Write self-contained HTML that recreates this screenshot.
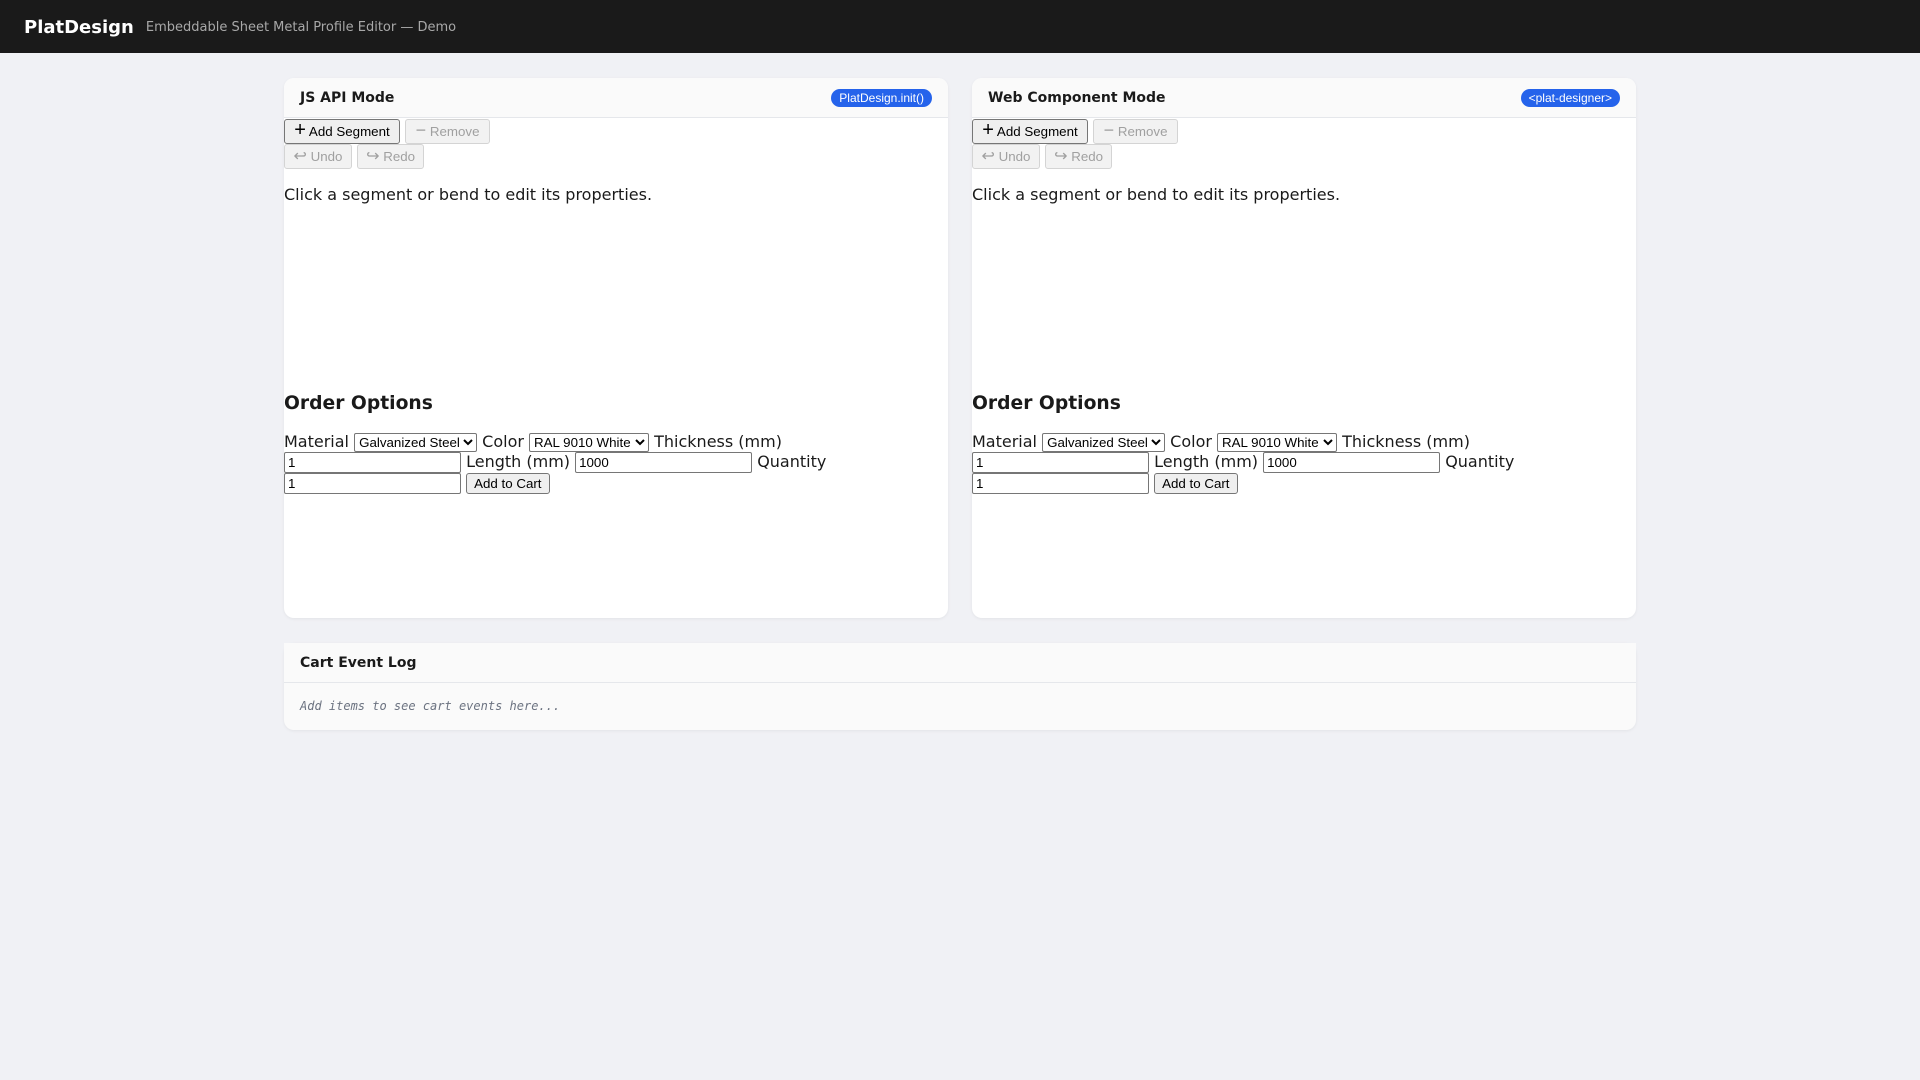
<!DOCTYPE html>
<html><head><meta charset="utf-8"><style>
*{box-sizing:border-box}
body{margin:0;background:#f0f1f5;font-family:"DejaVu Sans",sans-serif;font-size:16px;color:#1a1a1a}
.top{height:53px;background:#1a1a1a;display:flex;align-items:center;padding-left:24px}
.top b{color:#fff;font-size:18px;font-weight:bold;position:relative;top:1px}
.top span{color:#a8a8a8;font-size:13px;margin-left:12px;position:relative;top:1px}
.wrap{position:absolute;left:284px;top:78px;width:1352px}
.row{display:flex;gap:24px}
.card{background:#fff;border-radius:10px;width:664px;height:540px;box-shadow:0 1px 3px rgba(0,0,0,.06);overflow:hidden}
.hd{height:40px;background:#fafafa;border-bottom:1px solid #e5e7eb;display:flex;align-items:center;justify-content:space-between;padding:0 16px}
.hd b{font-size:14px}
.badge{background:#2563eb;color:#fff;font-family:"Liberation Sans",sans-serif;font-size:12px;padding:2px 8px;border-radius:10px}
button,select,input{font-family:"Liberation Sans",Arial,sans-serif;font-size:13.33px;color:#000}
.tb button{height:25px;background:#efefef;border:1px solid #767676;border-radius:3px;padding:0 6px;margin:0;vertical-align:top}
.tb button.d{color:#a0a0a0;border-color:#d4d4d4;background:#f2f2f2}
.tb .l1{height:25px;margin-top:1px}
.tb .l2{height:25px;margin-top:0}
p{margin:16px 0}
.sp{height:154px;margin-top:16px}
h3{font-size:18.72px;margin:18.72px 0}
.opt{line-height:20px}
select{height:19px;border:1px solid #767676;border-radius:2px;background:#fff;padding:0}
input{width:177px;height:21px;border:1px solid #767676;border-radius:2px;padding:1px 3px;vertical-align:middle}
.add{height:21px;background:#efefef;border:1px solid #767676;border-radius:3px;padding:0 7px}
.log{margin-top:25px;background:#fafafa;border-radius:10px;height:87px;box-shadow:0 1px 3px rgba(0,0,0,.06)}
.log .hd{height:40px}
.log i{display:block;padding:16px 16px;font-family:"DejaVu Sans Mono",monospace;font-size:12px;color:#6b7280}
</style></head><body>
<div class="top"><b>PlatDesign</b><span>Embeddable Sheet Metal Profile Editor — Demo</span></div>
<div class="wrap">
<div class="row">
<div class="card">
<div class="hd"><b>JS API Mode</b><span class="badge">PlatDesign.init()</span></div>
<div class="tb"><div class="l1"><button style="width:116px"><span style="font-size:20px;line-height:10px">+</span> Add Segment</button> <button class="d" style="width:85px"><span style="font-size:18px;line-height:10px">−</span> Remove</button></div>
<div class="l2"><button class="d" style="width:68px"><span style="font-size:16px;line-height:10px">↩</span> Undo</button> <button class="d" style="width:67px"><span style="font-size:16px;line-height:10px">↪</span> Redo</button></div></div>
<p>Click a segment or bend to edit its properties.</p>
<div class="sp"></div>
<h3>Order Options</h3>
<div class="opt">Material <select><option>Galvanized Steel</option></select> Color <select><option>RAL 9010 White</option></select> Thickness (mm) <input value="1"> Length (mm) <input value="1000"> Quantity <input value="1"> <button class="add">Add to Cart</button></div>
</div>
<div class="card">
<div class="hd"><b>Web Component Mode</b><span class="badge">&lt;plat-designer&gt;</span></div>
<div class="tb"><div class="l1"><button style="width:116px"><span style="font-size:20px;line-height:10px">+</span> Add Segment</button> <button class="d" style="width:85px"><span style="font-size:18px;line-height:10px">−</span> Remove</button></div>
<div class="l2"><button class="d" style="width:68px"><span style="font-size:16px;line-height:10px">↩</span> Undo</button> <button class="d" style="width:67px"><span style="font-size:16px;line-height:10px">↪</span> Redo</button></div></div>
<p>Click a segment or bend to edit its properties.</p>
<div class="sp"></div>
<h3>Order Options</h3>
<div class="opt">Material <select><option>Galvanized Steel</option></select> Color <select><option>RAL 9010 White</option></select> Thickness (mm) <input value="1"> Length (mm) <input value="1000"> Quantity <input value="1"> <button class="add">Add to Cart</button></div>
</div>
</div>
<div class="log"><div class="hd"><b>Cart Event Log</b></div><i>Add items to see cart events here...</i></div>
</div>
</body></html>
